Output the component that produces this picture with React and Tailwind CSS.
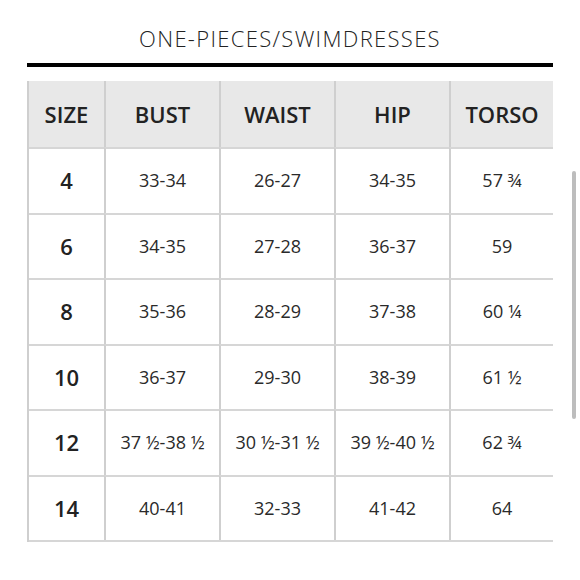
const rows = [
  ['4', '33-34', '26-27', '34-35', '57 ¾'],
  ['6', '34-35', '27-28', '36-37', '59'],
  ['8', '35-36', '28-29', '37-38', '60 ¼'],
  ['10', '36-37', '29-30', '38-39', '61 ½'],
  ['12', '37 ½-38 ½', '30 ½-31 ½', '39 ½-40 ½', '62 ¾'],
  ['14', '40-41', '32-33', '41-42', '64'],
];

const heads = ['SIZE', 'BUST', 'WAIST', 'HIP', 'TORSO'];

export default function App() {
  return (
    <div className="relative h-[580px] w-[580px] overflow-hidden bg-white font-['Open_Sans',sans-serif] text-[#222]">
      <div className="pt-[23px] text-center text-[22px] font-light tracking-[0.06em] leading-[30px]">
        ONE-PIECES/SWIMDRESSES
      </div>
      <div className="mx-[27px] mt-[10px] h-[4px] w-[526px] bg-black" />
      <div className="ml-[27px] mt-[14px] grid w-[526px] grid-cols-[75px_115px_115px_115px_104px] border-l-2 border-[#cfcfcf]">
        {heads.map((h, i) => (
          <div
            key={h}
            className={`flex h-[66px] items-center justify-center bg-[#e8e8e8] text-[22px] font-semibold text-[#222] ${i > 0 ? 'border-l-2 border-[#cfcfcf]' : ''}`}
          >
            {h}
          </div>
        ))}
        {rows.map((r) =>
          r.map((c, i) => (
            <div
              key={r[0] + i}
              className={`flex h-[65.5px] items-center justify-center border-t-2 border-[#d6d6d6] ${i > 0 ? 'border-l-2 border-l-[#cfcfcf] text-[18px] text-[#2a2a2a]' : 'text-[22px] font-semibold text-[#222]'}`}
            >
              {c}
            </div>
          ))
        )}
        {heads.map((h) => (
          <div key={'b' + h} className="h-0 border-t-2 border-[#d6d6d6]" />
        ))}
      </div>
      <div className="absolute left-[572px] top-[171px] h-[248px] w-[4px] rounded-full bg-[#bdbdbd]" />
    </div>
  );
}
